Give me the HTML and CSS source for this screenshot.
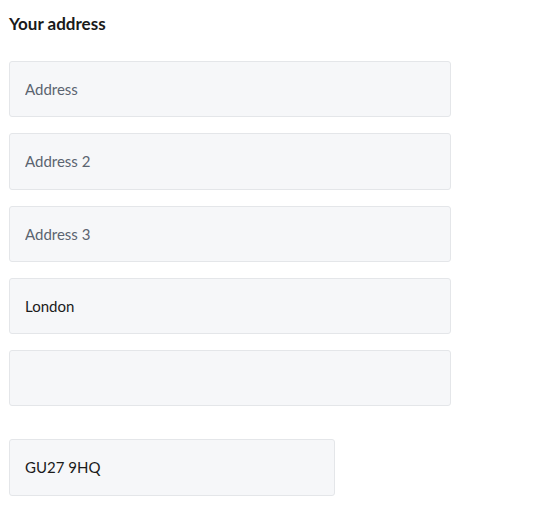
FILE: index.html
```html
<!DOCTYPE html>
<html lang="en">
<head>
  <meta charset="UTF-8" />
  <meta name="viewport" content="width=device-width, initial-scale=1.0"/>
  <title>Your address</title>
  <link rel="stylesheet" href="styles.css">
</head>
<body>
  <div class="address-box">
    <h2>Your address</h2>
    <form id="address-form">
      <input type="text" name="address1" placeholder="Address" />
      <input type="text" name="address2" placeholder="Address 2" />
      <input type="text" name="address3" placeholder="Address 3" />
      <input type="text" name="city" value="London" />
      <input type="text" name="county" />
      <input type="text" name="postcode" value="GU27 9HQ" class="postcode" />
    </form>
  </div>
</body>
</html>
```

FILE: styles.css
```css
* {
  margin: 0;
  padding: 0;
  box-sizing: border-box;
  font-family: Lato, "Liberation Sans", sans-serif;
}

body {
  background-color: #ffffff;
}

.address-box {
  padding: 14px 9px 0;
}

.address-box h2 {
  font-size: 17px;
  line-height: 20px;
  font-weight: bold;
  color: #1a1a1a;
  margin-bottom: 27px;
}

#address-form {
  display: flex;
  flex-direction: column;
  gap: 16px;
}

#address-form input {
  width: 442px;
  height: 56.25px;
  padding: 0 15px;
  border: 1px solid #e4e6e9;
  border-radius: 3px;
  background-color: #f6f7f9;
  font-size: 15px;
  color: #1b1b1b;
  outline: none;
}

#address-form input::placeholder {
  color: #5b6470;
  opacity: 1;
}

#address-form .postcode {
  width: 326px;
  margin-top: 17px;
}
```
